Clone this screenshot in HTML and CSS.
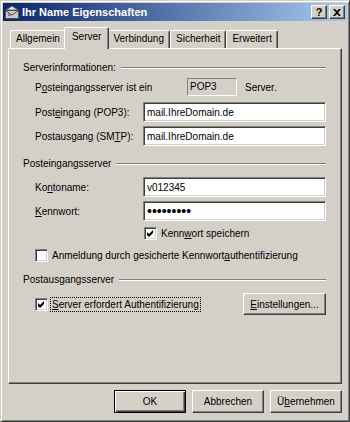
FILE: index.html
```html
<!DOCTYPE html>
<html lang="de">
<head>
  <meta charset="UTF-8" />
  <title>Ihr Name Eigenschaften</title>
  <link rel="stylesheet" href="styles.css">
</head>
<body>
  <div class="window">
    <div class="titlebar">
      <svg class="app-icon" width="16" height="16" viewBox="0 0 16 16">
        <path d="M2 6 L8 2 L14 6 Z" fill="#e8e8e8" stroke="#606060" stroke-width="1"/>
        <rect x="1.5" y="6.5" width="13" height="8" fill="#c8c8c8" stroke="#505050"/>
        <path d="M1.5 6.5 L8 11 L14.5 6.5" fill="none" stroke="#505050"/>
        <rect x="4" y="9" width="3" height="3" fill="#808080"/>
      </svg>
      <span class="title">Ihr Name Eigenschaften</span>
      <div class="caption-buttons">
        <span class="cap-btn">?</span>
        <span class="cap-btn">
          <svg width="8" height="7" viewBox="0 0 8 7"><path d="M0 0 L2 0 L4 2 L6 0 L8 0 L5 3.5 L8 7 L6 7 L4 5 L2 7 L0 7 L3 3.5 Z" fill="#000"/></svg>
        </span>
      </div>
    </div>

    <div class="dialog">
      <div class="tabs">
        <div class="tab">Allgemein</div>
        <div class="tab active">Server</div>
        <div class="tab">Verbindung</div>
        <div class="tab">Sicherheit</div>
        <div class="tab">Erweitert</div>
      </div>

      <div class="panel">
        <div class="group-title"><span>Serverinformationen:</span><span class="etch"></span></div>

        <div class="row info-row">
          <span class="label wide">P<u>o</u>steingangsserver ist ein</span>
          <span class="static-box">POP3</span>
          <span class="after">Server.</span>
        </div>
        <div class="row field-row first">
          <span class="label">Post<u>e</u>ingang (POP3):</span>
          <input class="field" type="text" value="mail.IhreDomain.de" readonly>
        </div>
        <div class="row field-row">
          <span class="label">Postausgang (SM<u>T</u>P):</span>
          <input class="field" type="text" value="mail.IhreDomain.de" readonly>
        </div>

        <div class="group-title spaced"><span>Posteingangsserver</span><span class="etch"></span></div>

        <div class="row field-row first">
          <span class="label">Ko<u>n</u>toname:</span>
          <input class="field" type="text" value="v012345" readonly>
        </div>
        <div class="row field-row">
          <span class="label"><u>K</u>ennwort:</span>
          <input class="field password" type="password" value="123456789" readonly>
        </div>

        <div class="row check-row save-row">
          <span class="checkbox checked"></span>
          <span>Kenn<u>w</u>ort speichern</span>
        </div>
        <div class="row check-row spa-row">
          <span class="checkbox"></span>
          <span>Anmeldung durch gesicherte Kennwort<u>a</u>uthentifizierung</span>
        </div>

        <div class="group-title spaced"><span>Postausgangsserver</span><span class="etch"></span></div>

        <div class="row auth-row">
          <span class="checkbox checked"></span>
          <span class="focus-text"><u>S</u>erver erfordert Authentifizierung</span>
          <button class="btn settings"><u>E</u>instellungen...</button>
        </div>
      </div>

      <div class="buttons">
        <button class="btn default">OK</button>
        <button class="btn">Abbrechen</button>
        <button class="btn">Ü<u>b</u>ernehmen</button>
      </div>
    </div>
  </div>
</body>
</html>
```

FILE: styles.css
```css
* {
  box-sizing: border-box;
}
body {
  margin: 0;
  font-family: 'Liberation Sans', Arial, sans-serif;
  font-size: 10px;
  color: #000;
  background: #d4d0c8;
}
u {
  text-decoration: underline;
  text-underline-offset: 1px;
}
.window {
  width: 350px;
  height: 422px;
  background: #d4d0c8;
  border: 1px solid;
  border-color: #d4d0c8 #404040 #404040 #d4d0c8;
  box-shadow: inset 1px 1px #fff, inset -1px -1px #808080;
  padding: 2px;
  display: flex;
  flex-direction: column;
}
.titlebar {
  height: 18px;
  flex-shrink: 0;
  display: flex;
  align-items: center;
  padding: 0 2px 0 1px;
  background: linear-gradient(to right, #0a246a, #a6caf0);
  color: #fff;
  font-size: 11px;
  font-weight: bold;
}
.app-icon {
  flex-shrink: 0;
  margin-right: 2px;
}
.title {
  flex: 1;
  white-space: nowrap;
}
.caption-buttons {
  display: flex;
  gap: 2px;
}
.cap-btn {
  width: 16px;
  height: 14px;
  display: flex;
  align-items: center;
  justify-content: center;
  background: #d4d0c8;
  color: #000;
  font-size: 11px;
  font-weight: bold;
  border: 1px solid;
  border-color: #fff #404040 #404040 #fff;
  box-shadow: inset -1px -1px #808080;
}
.dialog {
  flex: 1;
  padding: 6px 5px 0 5px;
}
.tabs {
  display: flex;
  align-items: flex-end;
  height: 21px;
  padding-left: 2px;
}
.tab {
  height: 18px;
  padding: 0 5px;
  line-height: 16px;
  background: #d4d0c8;
  border-top: 1px solid #fff;
  border-left: 1px solid #fff;
  border-right: 1px solid #404040;
  border-radius: 2px 2px 0 0;
  box-shadow: inset -1px 0 #808080;
  white-space: nowrap;
}
.tab.active {
  height: 22px;
  line-height: 17px;
  margin: 0 -2px -1px;
  padding: 0 7px;
  position: relative;
  z-index: 1;
}
.panel {
  height: 336px;
  border: 1px solid;
  border-color: #fff #404040 #404040 #fff;
  box-shadow: inset -1px -1px #808080;
  padding: 12px 15px 0 14px;
}
.group-title {
  display: flex;
  align-items: center;
  height: 13px;
  white-space: nowrap;
}
.group-title.spaced {
  margin-top: 11px;
}
.etch {
  flex: 1;
  margin-left: 5px;
  height: 2px;
  border-top: 1px solid #808080;
  border-bottom: 1px solid #fff;
}
.row {
  display: flex;
  align-items: center;
  margin-left: 12px;
  white-space: nowrap;
}
.label {
  width: 108px;
  flex-shrink: 0;
}
.label.wide {
  width: 152px;
}
.info-row {
  height: 18px;
  margin-top: 4px;
}
.static-box {
  width: 50px;
  height: 18px;
  line-height: 16px;
  padding-left: 2px;
  border: 1px solid;
  border-color: #808080 #fff #fff #808080;
}
.after {
  margin-left: 8px;
}
.field-row {
  height: 20px;
  margin-top: 4px;
}
.field-row.first {
  margin-top: 6px;
}
.group-title.spaced + .field-row.first {
  margin-top: 7px;
}
.field {
  flex: 1;
  min-width: 0;
  height: 20px;
  padding: 0 3px;
  font-family: 'Liberation Sans', Arial, sans-serif;
  font-size: 10px;
  color: #000;
  background: #fff;
  border: 1px solid;
  border-color: #808080 #fff #fff #808080;
  box-shadow: inset 1px 1px #404040, inset -1px -1px #d4d0c8;
  outline: none;
}
.field.password {
  font-size: 14px;
}
.check-row {
  height: 13px;
}
.save-row {
  margin-top: 6px;
  padding-left: 109px;
}
.spa-row {
  margin-top: 9px;
}
.checkbox {
  width: 13px;
  height: 13px;
  flex-shrink: 0;
  margin-right: 4px;
  background: #fff;
  border: 1px solid;
  border-color: #808080 #fff #fff #808080;
  box-shadow: inset 1px 1px #404040, inset -1px -1px #d4d0c8;
}
.checkbox.checked {
  background: #fff url("data:image/svg+xml;utf8,<svg xmlns='http://www.w3.org/2000/svg' width='11' height='11' viewBox='0 0 11 11'><path d='M2 4 L4 6 L8 2 L8 5 L4 9 L2 7 Z' fill='black'/></svg>") center / 11px 11px no-repeat;
}
.auth-row {
  height: 22px;
  margin-top: 7px;
}
.focus-text {
  padding: 0 1px;
  margin-left: -2px;
  line-height: 13px;
  border: 1px dotted #000;
}
.btn {
  height: 23px;
  padding: 0;
  font-family: 'Liberation Sans', Arial, sans-serif;
  font-size: 10px;
  color: #000;
  background: #d4d0c8;
  border: 1px solid;
  border-color: #fff #404040 #404040 #fff;
  box-shadow: inset -1px -1px #808080;
}
.btn.settings {
  width: 83px;
  height: 22px;
  margin-left: auto;
}
.buttons {
  display: flex;
  justify-content: flex-end;
  gap: 6px;
  margin-top: 6px;
}
.buttons .btn {
  width: 72px;
}
.btn.default {
  border: 1px solid #000;
  box-shadow: inset 1px 1px #fff, inset -1px -1px #404040, inset -2px -2px #808080;
}
```
